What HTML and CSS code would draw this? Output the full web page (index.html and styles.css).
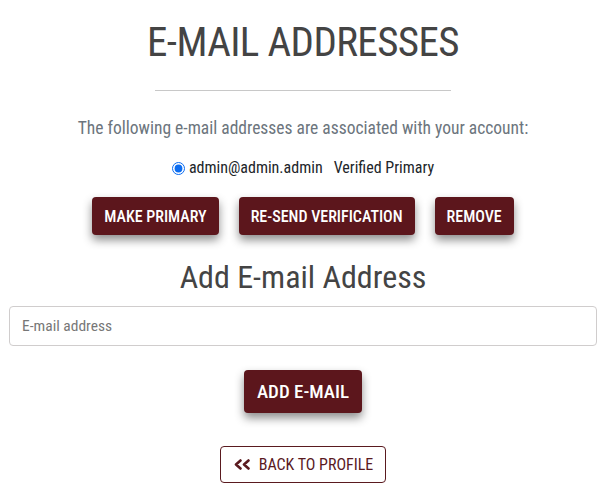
FILE: index.html
```html
<!DOCTYPE html>
<html>
<head>
<meta charset="utf-8">
<link rel="stylesheet" href="styles.css">
</head>
<body>
<main class="page">
  <h1 class="title">E-MAIL ADDRESSES</h1>
  <hr class="rule">
  <p class="lead">The following e-mail addresses are associated with your account:</p>
  <form class="email-list">
    <label class="email-row">
      <input type="radio" name="email" checked class="radio">
      <span class="addr">admin@admin.admin</span>
      <span class="status">Verified Primary</span>
    </label>
    <div class="actions">
      <button type="button" class="btn">Make Primary</button>
      <button type="button" class="btn">Re-send Verification</button>
      <button type="button" class="btn">Remove</button>
    </div>
  </form>
  <h2 class="subtitle">Add E-mail Address</h2>
  <form class="add-form">
    <input type="email" class="field" placeholder="E-mail address">
    <button type="button" class="btn btn-lg">Add E-mail</button>
  </form>
  <div class="back-wrap">
    <a class="back" href="#">
      <svg class="chev" width="19" height="11" viewBox="0 0 19 11"><path d="M7.5 1.5 3 5.5 7.5 9.5M15.5 1.5 11 5.5 15.5 9.5" fill="none" stroke="#5a1a1f" stroke-width="2.6" stroke-linecap="round" stroke-linejoin="round"/></svg>
      <span>Back to Profile</span>
    </a>
  </div>
</main>
</body>
</html>
```
FILE: styles.css
```css
* { box-sizing: border-box; }
body {
  margin: 0;
  background: #fff;
  font-family: "Roboto Condensed", Roboto, "Liberation Sans", sans-serif;
  font-stretch: condensed;
  color: #212529;
}
.page {
  padding: 0 9px;
  display: flex;
  flex-direction: column;
  align-items: center;
}
.title {
  margin: 18px 0 0;
  font-size: 41px;
  font-weight: 400;
  color: #444;
  line-height: 48px;
  letter-spacing: -0.6px;
}
.rule {
  width: 296px;
  margin: 24px 0 0;
  border: 0;
  border-top: 1px solid #c8c8c8;
}
.lead {
  margin: 25px 0 0;
  font-size: 17.5px;
  line-height: 24px;
  color: #6c757d;
}
.email-list {
  display: flex;
  flex-direction: column;
  align-items: center;
}
.email-row {
  margin-top: 17px;
  display: flex;
  align-items: center;
  font-size: 16px;
  line-height: 22px;
}
.radio {
  margin: 0 4px 0 0;
  width: 13px;
  height: 13px;
  accent-color: #0b6cf0;
}
.addr { margin-right: 11px; }
.actions {
  margin-top: 18px;
  display: flex;
  gap: 20px;
}
.btn {
  font-family: inherit;
  font-stretch: condensed;
  background: #5c161c;
  color: #fff;
  border: 0;
  border-radius: 4px;
  text-transform: uppercase;
  font-size: 16px;
  font-weight: 500;
  height: 38px;
  padding: 0 12px;
  box-shadow: 0 5px 10px rgba(0,0,0,0.45);
}
.subtitle {
  margin: 23px 0 0;
  font-size: 32px;
  font-weight: 400;
  color: #444;
  line-height: 38px;
}
.add-form {
  width: 100%;
  display: flex;
  flex-direction: column;
  align-items: center;
}
.field {
  margin-top: 10px;
  width: 100%;
  height: 40px;
  border: 1px solid #d0cdcd;
  border-radius: 4px;
  padding: 0 12px;
  font-family: inherit;
  font-stretch: condensed;
  font-size: 15.5px;
}
.field::placeholder { color: #777; }
.btn-lg {
  margin-top: 24px;
  height: 43px;
  font-size: 19px;
  padding: 0 13px;
}
.back-wrap {
  margin-top: 33px;
}
.back {
  display: flex;
  align-items: center;
  gap: 7px;
  height: 37px;
  padding: 0 12px 0 12px;
  border: 1px solid #5a1a1f;
  border-radius: 4px;
  color: #5a1a1f;
  text-decoration: none;
  text-transform: uppercase;
  font-size: 16px;
}
```
